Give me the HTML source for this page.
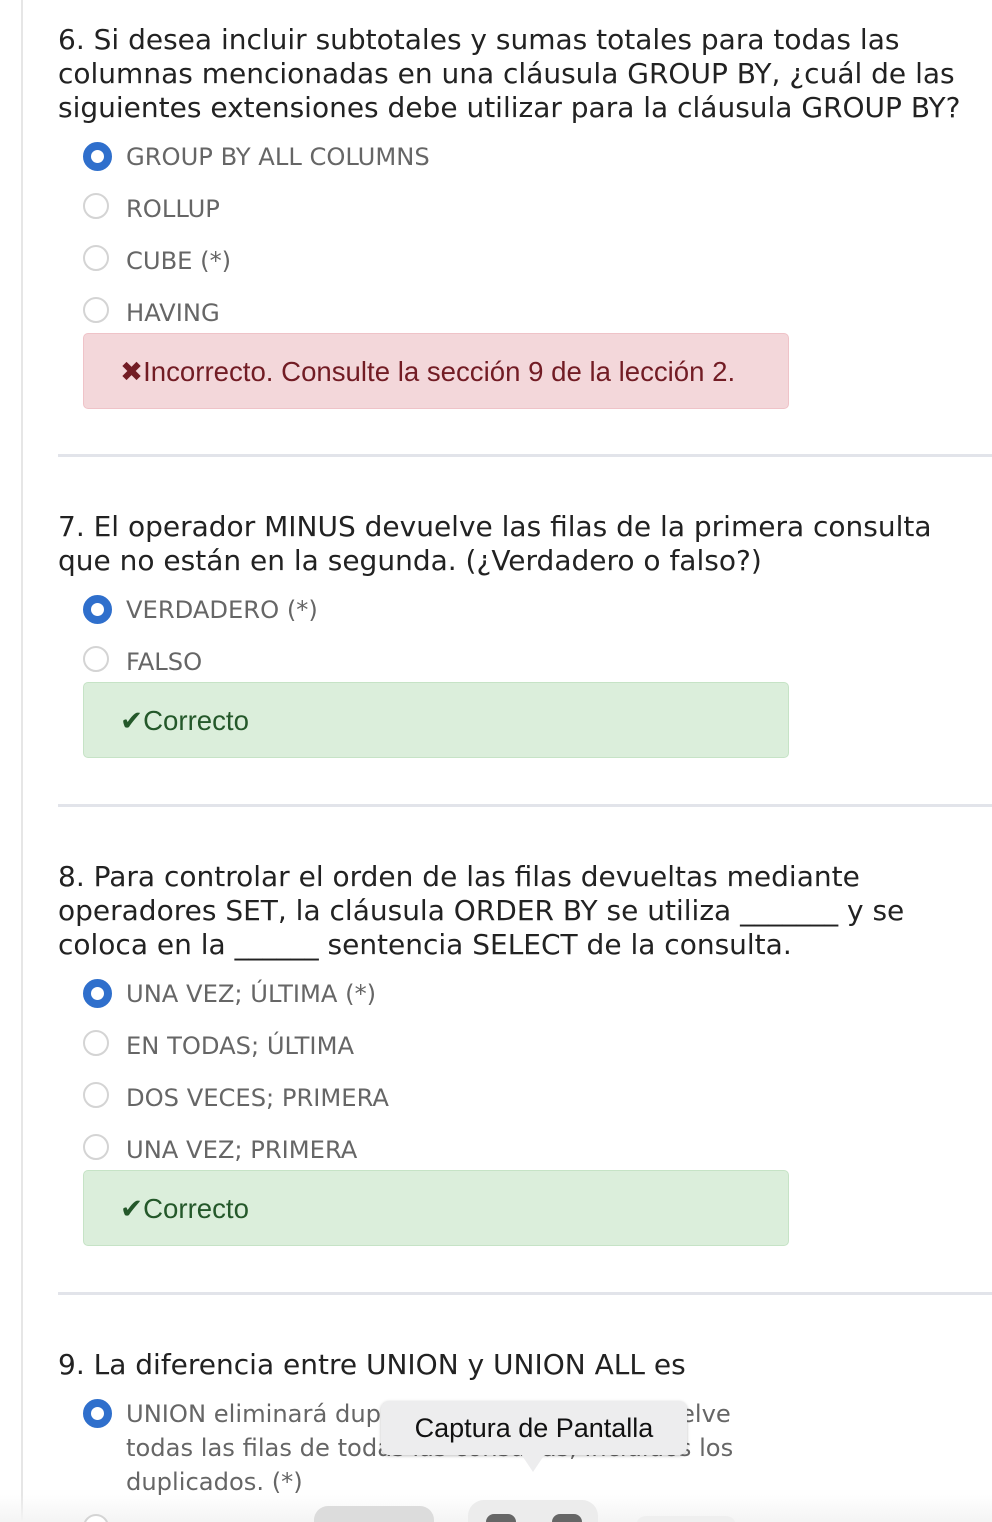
<!DOCTYPE html>
<html><head><meta charset="utf-8"><style>
html,body{margin:0;width:992px;height:1522px;overflow:hidden}
body{background:#fff;position:relative;font-family:"DejaVu Sans",Verdana,sans-serif}
.vl{position:absolute;left:21px;top:0;width:2px;height:1522px;background:#e6e6e6}
.q{position:absolute;left:58px;font-size:28px;line-height:34px;color:#222;white-space:nowrap;letter-spacing:0}
.o{position:absolute;left:126px;font-size:24.2px;line-height:34px;color:#666;white-space:nowrap;letter-spacing:0}
.r{position:absolute;left:83px;width:26px;height:26px;border:2px solid #d4d4d4;border-radius:50%;box-sizing:border-box;background:#fff}
.r.on{border:8px solid #2f6fcc;width:29px;height:29px;left:83px}
.fb{position:absolute;left:83px;width:706px;height:76px;border-radius:5px;box-sizing:border-box;font-family:"Liberation Sans",Arial,sans-serif;font-size:27.6px;line-height:76px;padding-left:36px;white-space:nowrap}
.bad{background:#f3d7da;border:1.5px solid #efc3c8;color:#721c24}
.good{background:#dbeedb;border:1.5px solid #c6e3c6;color:#24582a}
.sep{position:absolute;left:58px;width:934px;height:3px;background:#e2e4ea}
</style></head><body>
<div class="vl"></div>
<div class="q" style="top:23px">6. Si desea incluir subtotales y sumas totales para todas las</div>
<div class="q" style="top:57px">columnas mencionadas en una cláusula GROUP BY, ¿cuál de las</div>
<div class="q" style="top:91px">siguientes extensiones debe utilizar para la cláusula GROUP BY?</div>
<div class="r on" style="top:142px"></div><div class="o" style="top:140px">GROUP BY ALL COLUMNS</div>
<div class="r" style="top:193px"></div><div class="o" style="top:192px">ROLLUP</div>
<div class="r" style="top:245px"></div><div class="o" style="top:244px">CUBE (*)</div>
<div class="r" style="top:297px"></div><div class="o" style="top:296px">HAVING</div>
<div class="fb bad" style="top:333px">✖Incorrecto. Consulte la sección 9 de la lección 2.</div>
<div class="sep" style="top:454px"></div>
<div class="q" style="top:510px">7. El operador MINUS devuelve las filas de la primera consulta</div>
<div class="q" style="top:544px">que no están en la segunda. (¿Verdadero o falso?)</div>
<div class="r on" style="top:595px"></div><div class="o" style="top:593px">VERDADERO (*)</div>
<div class="r" style="top:646px"></div><div class="o" style="top:645px">FALSO</div>
<div class="fb good" style="top:682px">✔Correcto</div>
<div class="sep" style="top:804px"></div>
<div class="q" style="top:860px">8. Para controlar el orden de las filas devueltas mediante</div>
<div class="q" style="top:894px">operadores SET, la cláusula ORDER BY se utiliza _______ y se</div>
<div class="q" style="top:928px">coloca en la ______ sentencia SELECT de la consulta.</div>
<div class="r on" style="top:979px"></div><div class="o" style="top:977px">UNA VEZ; ÚLTIMA (*)</div>
<div class="r" style="top:1030px"></div><div class="o" style="top:1029px">EN TODAS; ÚLTIMA</div>
<div class="r" style="top:1082px"></div><div class="o" style="top:1081px">DOS VECES; PRIMERA</div>
<div class="r" style="top:1134px"></div><div class="o" style="top:1133px">UNA VEZ; PRIMERA</div>
<div class="fb good" style="top:1170px">✔Correcto</div>
<div class="sep" style="top:1292px"></div>
<div class="q" style="top:1348px">9. La diferencia entre UNION y UNION ALL es</div>
<div class="r on" style="top:1399px"></div>
<div class="o" style="top:1397px">UNION eliminará duplicados; UNION ALL devuelve</div>
<div class="o" style="top:1431px">todas las filas de todas las consultas, incluidos los</div>
<div class="o" style="top:1465px">duplicados. (*)</div>
<div style="position:absolute;left:0;top:1495px;width:992px;height:27px;background:linear-gradient(rgba(244,244,244,0),#f4f4f4)"></div>
<div class="r" style="top:1514px"></div>
<div style="position:absolute;left:314px;top:1506px;width:120px;height:30px;border-radius:14px;background:#dcdcdc"></div>
<div style="position:absolute;left:468px;top:1500px;width:130px;height:40px;border-radius:16px;background:#ececec"></div>
<div style="position:absolute;left:486px;top:1514px;width:30px;height:20px;border-radius:8px;background:#666"></div>
<div style="position:absolute;left:552px;top:1514px;width:30px;height:20px;border-radius:8px;background:#666"></div>
<div style="position:absolute;left:636px;top:1516px;width:100px;height:20px;border-radius:10px;background:#efefef"></div>
<div style="position:absolute;left:381px;top:1401px;width:306px;height:54px;background:#ededee;border-radius:8px;box-shadow:0 1px 3px rgba(0,0,0,.25);font-family:'Liberation Sans',Arial,sans-serif;font-size:27px;line-height:54px;text-align:center;color:#111">Captura de Pantalla</div>
<div style="position:absolute;left:521px;top:1454px;width:0;height:0;border-left:12px solid transparent;border-right:12px solid transparent;border-top:18px solid #ededee"></div>
</body></html>
